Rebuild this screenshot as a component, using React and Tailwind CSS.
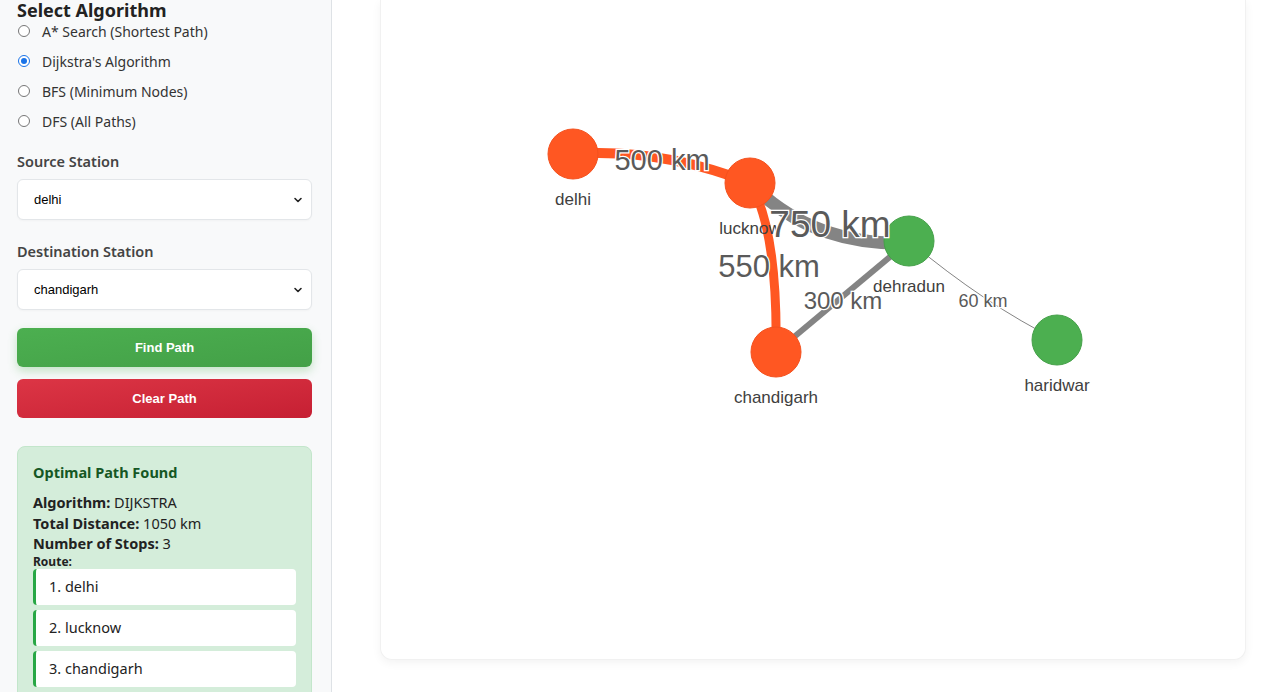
import React from "react";

const nodes = [
  { id: "delhi", x: 572, y: 154, c: "#FF5722" },
  { id: "lucknow", x: 749, y: 183, c: "#FF5722" },
  { id: "dehradun", x: 908, y: 241, c: "#4CAF50" },
  { id: "chandigarh", x: 775, y: 352, c: "#FF5722" },
  { id: "haridwar", x: 1056, y: 340, c: "#4CAF50" },
];

const edges = [
  { d: "M572,154 Q660,148 749,183", c: "#FF5722", w: 10 },
  { d: "M749,183 Q810,246 908,243", c: "#848484", w: 13 },
  { d: "M749,183 Q777,230 775,352", c: "#FF5722", w: 9 },
  { d: "M775,352 L908,241", c: "#848484", w: 6 },
  { d: "M908,241 Q985,305 1056,340", c: "#848484", w: 1 },
];

const edgeLabels = [
  { t: "500 km", x: 661, y: 160, s: 29 },
  { t: "750 km", x: 829, y: 224, s: 37 },
  { t: "550 km", x: 768, y: 266, s: 31 },
  { t: "300 km", x: 842, y: 300, s: 24 },
  { t: "60 km", x: 982, y: 301, s: 18 },
];

function Radio({ checked, label }) {
  return (
    <div className="flex items-center h-[30px]">
      <span
        className={
          "ml-[18px] w-[12px] h-[12px] rounded-full border flex items-center justify-center bg-white " +
          (checked ? "border-[#1a73e8]" : "border-[#767676]")
        }
      >
        {checked && <span className="w-[6px] h-[6px] rounded-full bg-[#1a73e8]" />}
      </span>
      <span className="ml-[12px] text-[14px] text-[#333]">{label}</span>
    </div>
  );
}

function FakeSelect({ value }) {
  return (
    <div className="h-[41px] bg-white border border-[#e3e6e9] rounded-[6px] flex items-center justify-between pl-[16px] pr-[8px] shadow-[0_1px_2px_rgba(0,0,0,0.03)]">
      <span className="text-[13px] text-black font-['Liberation_Sans',Arial,sans-serif]">{value}</span>
      <svg width="10" height="10" viewBox="0 0 10 10">
        <path d="M2 3.5 L5 6.5 L8 3.5" fill="none" stroke="#222" strokeWidth="1.6" strokeLinecap="round" strokeLinejoin="round" />
      </svg>
    </div>
  );
}

export default function App() {
  return (
    <div className="h-[692px] w-[1280px] flex overflow-hidden bg-white font-['Noto_Sans','Open_Sans',sans-serif]">
      <aside className="w-[332px] shrink-0 h-full bg-[#f8f9fa] border-r border-[#dee2e6] overflow-hidden">
        <h3 className="pl-[17px] text-[18px] leading-[20px] font-bold text-[#222]">Select Algorithm</h3>
        <div className="-mt-[4px]">
          <Radio label="A* Search (Shortest Path)" />
          <Radio checked label="Dijkstra's Algorithm" />
          <Radio label="BFS (Minimum Nodes)" />
          <Radio label="DFS (All Paths)" />
        </div>
        <div className="px-[17px] pr-[19px]">
          <div className="mt-[15px] text-[14.5px] leading-[20px] font-semibold text-[#444]">Source Station</div>
          <div className="mt-[8px]">
            <FakeSelect value="delhi" />
          </div>
          <div className="mt-[21px] text-[14.5px] leading-[20px] font-semibold text-[#444]">Destination Station</div>
          <div className="mt-[8px]">
            <FakeSelect value="chandigarh" />
          </div>
          <button className="mt-[18px] w-full h-[39px] rounded-[6px] bg-gradient-to-br from-[#4CAF50] to-[#43a047] text-white text-[13px] font-bold font-['Liberation_Sans',Arial,sans-serif] shadow-[0_4px_10px_rgba(76,175,80,0.3)]">
            Find Path
          </button>
          <button className="mt-[12px] w-full h-[39px] rounded-[6px] bg-gradient-to-br from-[#dc3545] to-[#c61f33] text-white text-[13px] font-bold font-['Liberation_Sans',Arial,sans-serif]">
            Clear Path
          </button>
          <div className="mt-[28px] bg-[#d4edda] border border-[#c3e6cb] rounded-[8px] px-[15px] pt-[14px] pb-[15px]">
            <div className="text-[14.5px] leading-[22px] font-bold text-[#155724]">Optimal Path Found</div>
            <div className="mt-[9px] text-[14.5px] leading-[20.5px] text-[#222]">
              <div><b>Algorithm:</b> DIJKSTRA</div>
              <div><b>Total Distance:</b> 1050 km</div>
              <div><b>Number of Stops:</b> 3</div>
            </div>
            <div className="text-[12px] leading-[15px] font-bold text-[#222]">Route:</div>
            <div className="flex flex-col gap-[5px]">
              {["1. delhi", "2. lucknow", "3. chandigarh"].map((r) => (
                <div key={r} className="h-[36px] bg-white rounded-[4px] border-l-[3px] border-[#28a745] flex items-center pl-[13px] text-[14.5px] text-[#222]">
                  {r}
                </div>
              ))}
            </div>
          </div>
        </div>
      </aside>
      <main className="flex-1 h-full pl-[48px] pr-[34px] pb-[32px]">
        <div className="relative h-full bg-white rounded-b-[12px] border-x border-b border-[#f1f1f1] shadow-[0_3px_10px_rgba(0,0,0,0.05)] overflow-hidden">
          <svg className="absolute left-0 top-0" width="866" height="660" viewBox="380 0 866 660">
            {edges.map((e, i) => (
              <path key={i} d={e.d} fill="none" stroke={e.c} strokeWidth={e.w} />
            ))}
            {nodes.map((n) => (
              <circle key={n.id} cx={n.x} cy={n.y} r="25" fill={n.c} stroke={n.c === "#FF5722" ? "#f4511e" : "#45a049"} strokeWidth="1" />
            ))}
            {nodes.map((n) => (
              <text key={n.id + "l"} x={n.x} y={n.y + 51} textAnchor="middle" fontFamily="Liberation Sans, Arial, sans-serif" fontSize="17" fill="#404040">
                {n.id}
              </text>
            ))}
            {edgeLabels.map((l) => (
              <text
                key={l.t}
                x={l.x}
                y={l.y + l.s * 0.36}
                textAnchor="middle"
                fontFamily="Liberation Sans, Arial, sans-serif"
                fontSize={l.s}
                fill="#5a5a5a"
                stroke="#ffffff"
                strokeWidth="2.5"
                paintOrder="stroke"
              >
                {l.t}
              </text>
            ))}
          </svg>
        </div>
      </main>
    </div>
  );
}
